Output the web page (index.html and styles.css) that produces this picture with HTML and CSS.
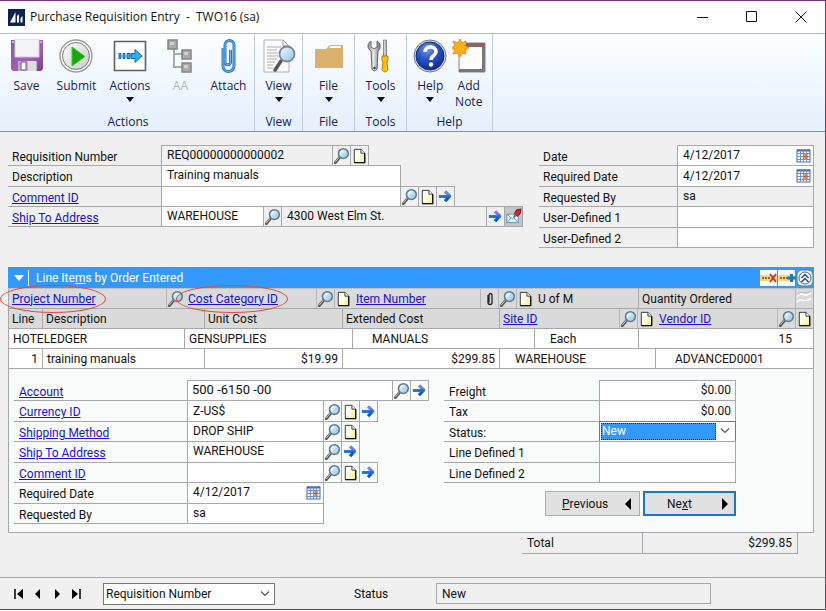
FILE: index.html
```html
<!DOCTYPE html>
<html lang="en">
<head>
<meta charset="utf-8">
<meta name="viewport" content="width=device-width, initial-scale=1">
<title>Purchase Requisition Entry</title>
<link rel="stylesheet" href="styles.css">
</head>
<body>
<svg class="sprite" aria-hidden="true">
  <defs>
    <linearGradient id="g-lens" x1="0" y1="0" x2="1" y2="1"><stop offset="0" stop-color="#f4fbff"/><stop offset="1" stop-color="#8fc1dc"/></linearGradient>
    <linearGradient id="g-page" x1="0" y1="0" x2="1" y2="1"><stop offset=".4" stop-color="#fffff4"/><stop offset="1" stop-color="#f5ef70"/></linearGradient>
    <linearGradient id="g-purple" x1="0" y1="0" x2="1" y2="1"><stop offset="0" stop-color="#8a5f9e"/><stop offset=".6" stop-color="#a05cb8"/><stop offset="1" stop-color="#74458c"/></linearGradient>
    <linearGradient id="g-steel" x1="0" y1="0" x2="1" y2="0"><stop offset="0" stop-color="#8d8d8d"/><stop offset=".45" stop-color="#e8e8e8"/><stop offset="1" stop-color="#6f6f6f"/></linearGradient>
    <linearGradient id="g-silver" x1="0" y1="0" x2="1" y2="1"><stop offset="0" stop-color="#ffffff"/><stop offset="1" stop-color="#c9c9c9"/></linearGradient>
    <radialGradient id="g-help" cx=".4" cy=".25" r=".8"><stop offset="0" stop-color="#7396e6"/><stop offset=".5" stop-color="#2450c0"/><stop offset="1" stop-color="#132a86"/></radialGradient>
  </defs>
  <symbol id="i-lens" viewBox="0 0 18 18">
    <path d="M7 11L2.5 16.5" stroke="#55504e" stroke-width="3" stroke-linecap="round"/>
    <path d="M6.6 10.8L2.6 15.8" stroke="#d8d4d0" stroke-width="1" stroke-linecap="round"/>
    <circle cx="11" cy="7" r="5.200" fill="url(#g-lens)" stroke="#5c7c92" stroke-width="1.600"/>
    <path d="M8 7a3 3 0 0 1 3-3" stroke="#fff" stroke-width="1.2" fill="none"/>
  </symbol>
  <symbol id="i-page" viewBox="0 0 18 18">
    <path d="M3.500 2.500h7l4 4v10h-11z" fill="url(#g-page)" stroke="#333" stroke-width="1"/>
    <path d="M10.500 2.500v4h4" fill="#fff" stroke="#333" stroke-width="1"/>
    <path d="M14.500 6.500v10h-11" fill="none" stroke="#111" stroke-width="1.400"/>
  </symbol>
  <symbol id="i-arrow" viewBox="0 0 18 18">
    <path d="M2 9h11" fill="none" stroke="#1870d0" stroke-width="3"/>
    <path d="M13.500 8.500L8.500 14" stroke="#0d58b8" stroke-width="3.400"/>
    <path d="M8.500 3.500l5.500 5.500" stroke="#7c80d6" stroke-width="3.400"/>
    <path d="M11 6.500L15.500 9 11 11.500z" fill="#1870d0"/>
  </symbol>
  <symbol id="i-cal" viewBox="0 0 16 14">
    <rect x="1" y="1" width="13" height="12" fill="#fff" stroke="#4668a8"/>
    <path d="M1 1.500h13" stroke="#3f68b8" stroke-width="2"/>
    <path d="M4.500 1v12M7.500 1v12M10.500 1v12M1 4.500h13M1 7.500h13M1 10.500h13" stroke="#6f8fca" stroke-width="1"/>
    <rect x="8" y="5" width="4" height="5" fill="#f0a080"/>
    <path d="M8 7.500h4M10 5v5" stroke="#cc5a38"/>
  </symbol>
  <symbol id="i-mail" viewBox="0 0 18 18">
    <path d="M2 6.500h12v9H2z" fill="#e8f6fa" stroke="#5c98b0"/>
    <path d="M2 6.500l6 5 6-5M2 15.500l4.500-5M14 15.500l-4.500-5" fill="none" stroke="#5c98b0"/>
    <path d="M12 2l5-1-1 5-3 3-3-3z" fill="#d8202c" stroke="#8e1018"/>
    <path d="M11 7l-2 3" stroke="#555" stroke-width="1.200"/>
  </symbol>
  <symbol id="i-clip" viewBox="0 0 8 16">
    <path d="M2 4v7.500a2 2 0 0 0 4 0V4a1.500 1.500 0 0 0-3 0v7.500" fill="none" stroke="#222" stroke-width="1.300"/>
  </symbol>
  <symbol id="i-caret" viewBox="0 0 10 6"><path d="M1 0h8L5 5z" fill="#0c0c3a"/></symbol>
  <symbol id="i-chevron" viewBox="0 0 10 6"><path d="M1 .5l4 4 4-4" fill="none" stroke="#555" stroke-width="1.200"/></symbol>
</svg>

<div class="window">
  <header class="titlebar">
    <svg class="app-icon" viewBox="0 0 17 17" aria-hidden="true"><path d="M0 0h17v17H0z" fill="#0a2450"/><path d="M2 13.500L7.500 3v10.500zM9 13.500V7l2-2v8.500zM12.500 13.500V9l2-2v6.500z" fill="#fff"/></svg>
    <h1>Purchase Requisition Entry&nbsp; -&nbsp; TWO16 (sa)</h1>
    <div class="window-controls">
      <button aria-label="Minimize"><svg viewBox="0 0 12 12"><path d="M0 6.500h11"/></svg></button>
      <button aria-label="Maximize"><svg viewBox="0 0 12 12"><path d="M.5 .5h10v10H.5z"/></svg></button>
      <button aria-label="Close"><svg viewBox="0 0 12 12"><path d="M.5 .5l11 11M11.500 .5l-11 11"/></svg></button>
    </div>
  </header>

  <nav class="ribbon" aria-label="Ribbon">
    <section class="group group-actions">
      <div class="tools">
        <button class="tool"><svg viewBox="0 0 34 34">
          <path d="M1 1h32v29l-2 2H3l-2-2z" fill="url(#g-purple)"/><path d="M5 0h24v18H5z" fill="#f3f2f4" stroke="#d4cdd8"/><path d="M8 22h19v10H8z" fill="#eee"/><path d="M8 22h19v10H8z" fill="#7b6a84" opacity=".45"/><path d="M18 22h8v10h-8z" fill="#ddd"/><path d="M11 23h5v8h-5z" fill="#fff" stroke="#76508a"/><path d="M2 3h2M30 3h2" stroke="#fff"/></svg>Save</button>
        <button class="tool"><svg viewBox="0 0 34 34">
          <circle cx="17" cy="17" r="16" fill="#fff" stroke="#999" stroke-width="1.400"/><circle cx="17" cy="17" r="13.500" fill="url(#g-silver)" stroke="#777"/><path d="M13 8l13 9.500L13 27z" fill="#16a80e" stroke="#3fc636"/></svg>Submit</button>
        <button class="tool"><svg viewBox="0 0 34 34">
          <path d="M1.500 2.500h31v29h-31z" fill="#fdfdfd" stroke="#606060" stroke-width="1.600"/><path d="M6 14.500h2v5H6zM10 14.500h2v5h-2zM14 14.500h3v5h-3zM18 14.500h4v-4l7 6.500-7 6.500v-4h-4z" fill="#30b0f4" stroke="#1668a8"/></svg>Actions<svg class="caret"><use href="#i-caret"/></svg></button>
        <button class="tool" disabled><svg viewBox="0 0 34 34">
          <path d="M11 10v18h11M11 15h11" fill="none" stroke="#aaa" stroke-width="2"/><path d="M5 1h9v9H5zM19 11h9v9h-9zM19 24h9v9h-9z" fill="#aaa" stroke="#858585" stroke-width="1.500"/><path d="M7 3h4v3H7zM21 13h4v3h-4zM21 26h4v3h-4z" fill="#d0d0d0"/></svg>AA</button>
        <button class="tool"><svg viewBox="0 0 34 34">
          <path d="M12 9v18a5 5 0 0 0 11 0V6a4 4 0 0 0-9 0v18a3 3 0 0 0 5.500 0V11" fill="none" stroke="#2f78bc" stroke-width="3"/><path d="M12 9v18a5 5 0 0 0 11 0V6a4 4 0 0 0-9 0v18a3 3 0 0 0 5.500 0V11" fill="none" stroke="#76b4e6" stroke-width="1"/></svg>Attach</button>
      </div>
      <h2>Actions</h2>
    </section>
    <section class="group group-view">
      <div class="tools"><button class="tool"><svg viewBox="0 0 34 34">
        <path d="M2 1h19l6 6v26H2z" fill="#fcfcfc" stroke="#b0b0b0"/><path d="M21 1v6h6" fill="none" stroke="#999"/><path d="M5 8h14M5 11h10M5 14h11M5 17h11M5 20h10M5 23h8M5 26h6M5 29h6" stroke="#a9a9b5"/><path d="M19 22l-6 9" stroke="#555" stroke-width="3.500" stroke-linecap="round"/><circle cx="25" cy="15" r="7.500" fill="url(#g-lens)" stroke="#70889c" stroke-width="1.800"/></svg>View<svg class="caret"><use href="#i-caret"/></svg></button></div>
      <h2>View</h2>
    </section>
    <section class="group group-file">
      <div class="tools"><button class="tool"><svg viewBox="0 0 34 34">
        <path d="M3 10h11l4-4h13v23H3z" fill="#d9b06c"/><path d="M17 9l2-2h10v2z" fill="#fff"/></svg>File<svg class="caret"><use href="#i-caret"/></svg></button></div>
      <h2>File</h2>
    </section>
    <section class="group group-file">
      <div class="tools"><button class="tool"><svg viewBox="0 0 34 34">
        <path d="M7 2v6l3 2 3-2V2c4 2 4 8 1 10l-1 18q-3 4-5 0L7 12C3 10 3 4 7 2z" fill="url(#g-steel)" stroke="#666"/><circle cx="10.500" cy="29" r="1.300" fill="#444"/><path d="M19.500 1h3v16h-3z" fill="url(#g-steel)" stroke="#666" stroke-width=".6"/><path d="M18 17h6v4l-1 3 1 7q-3 4-6 0l1-7-1-3z" fill="#f9bd16" stroke="#b8860b"/></svg>Tools<svg class="caret"><use href="#i-caret"/></svg></button></div>
      <h2>Tools</h2>
    </section>
    <section class="group group-help">
      <div class="tools">
        <button class="tool"><svg viewBox="0 0 34 34">
          <circle cx="17" cy="17" r="16" fill="#d7dbe3" stroke="#667792"/><circle cx="17" cy="17" r="14" fill="url(#g-help)" stroke="#172b70"/><path d="M12 13c0-7 11-6.500 11-.5 0 4.500-5 4-5 8.500" fill="none" stroke="#fff" stroke-width="3.600"/><circle cx="18" cy="25.500" r="2.200" fill="#fff"/></svg>Help<svg class="caret"><use href="#i-caret"/></svg></button>
        <button class="tool"><svg viewBox="0 0 34 34">
          <path d="M7 4h26v29H7z" fill="#fdfdfd" stroke="#858585"/><path d="M7 4h26v4H7z" fill="#8e655c"/><path d="M31.500 8v23.500H7" fill="none" stroke="#777" stroke-width="3"/><path d="M8 0l2 4 4-2-1 5 4 2-4 2 1 4-4-1-2 4-2-4-5 1 2-4-4-2 4-2-2-5 5 2z" fill="#ffae22" stroke="#e8900e"/></svg><span>Add<br>Note</span></button>
      </div>
      <h2>Help</h2>
    </section>
  </nav>

  <main>
    <div class="head">
      <div class="form form-head">
        <div class="row"><label for="req">Requisition Number</label><input id="req" class="w-id read" value="REQ00000000000002" readonly><button class="ic" aria-label="Lookup requisition"><svg><use href="#i-lens"/></svg></button><button class="ic" aria-label="Requisition note"><svg><use href="#i-page"/></svg></button></div>
        <div class="row"><label for="desc">Description</label><input id="desc" class="w-wide" value="Training manuals"></div>
        <div class="row"><label for="comment"><a href="#comment">Comment ID</a></label><input id="comment" class="w-wide"><button class="ic" aria-label="Lookup comment"><svg><use href="#i-lens"/></svg></button><button class="ic" aria-label="Comment note"><svg><use href="#i-page"/></svg></button><button class="ic" aria-label="Open comment"><svg><use href="#i-arrow"/></svg></button></div>
        <div class="row"><label for="ship"><a href="#ship">Ship To Address</a></label><input id="ship" class="w-code" value="WAREHOUSE"><button class="ic" aria-label="Lookup address"><svg><use href="#i-lens"/></svg></button><input class="w-street read" aria-label="Street address" value="4300 West Elm St." readonly><button class="ic" aria-label="Open address"><svg><use href="#i-arrow"/></svg></button><button class="ic dark" aria-label="Internet information"><svg><use href="#i-mail"/></svg></button></div>
      </div>
      <div class="form form-dates">
        <div class="row"><label for="date">Date</label><span class="datebox"><input id="date" value="4/12/2017"><button aria-label="Pick date"><svg><use href="#i-cal"/></svg></button></span></div>
        <div class="row"><label for="rdate">Required Date</label><span class="datebox"><input id="rdate" value="4/12/2017"><button aria-label="Pick required date"><svg><use href="#i-cal"/></svg></button></span></div>
        <div class="row"><label for="by">Requested By</label><input id="by" class="w-std read" value="sa" readonly></div>
        <div class="row"><label for="ud1">User-Defined 1</label><input id="ud1" class="w-std"></div>
        <div class="row"><label for="ud2">User-Defined 2</label><input id="ud2" class="w-std"></div>
      </div>
    </div>

    <section class="lines">
      <div class="lines-bar">
        <button class="sort"><svg class="sort-caret" viewBox="0 0 10 6"><path d="M0 0h10L5 6z" fill="#fff"/></svg><span>Line Ite<u>m</u>s by Order Entered</span></button>
        <div class="bar-tools">
          <button aria-label="Delete row"><svg viewBox="0 0 18 18"><path d="M0 1h17v16H0z" fill="#fbfbf4"/><path d="M0 6h17v6H0z" fill="#f0d48a"/><path d="M2 9h9" stroke="#9a6a2c" stroke-width="2" stroke-dasharray="2 1"/><path d="M10 5l6 8M16 5l-6 8" stroke="#c83232" stroke-width="1.800"/></svg></button>
          <button aria-label="Insert row"><svg viewBox="0 0 18 18"><path d="M0 1h17v16H0z" fill="#fbfbf4"/><path d="M0 6h17v6H0z" fill="#f0d48a"/><path d="M2 9h8" stroke="#9a6a2c" stroke-width="2" stroke-dasharray="2 1"/><path d="M13.500 5v8M9.500 9h8" stroke="#1680b4" stroke-width="3"/></svg></button>
          <button aria-label="Hide details"><svg viewBox="0 0 18 18"><rect x="1" y="1" width="16" height="16" rx="5" fill="#e4eef4" stroke="#607c90"/><circle cx="9" cy="9" r="6" fill="#f8fcff" stroke="#4a7488"/><path d="M5.500 9L9 5.500 12.500 9M5.500 13L9 9.500l3.500 3.500" fill="none" stroke="#244e68" stroke-width="1.500"/></svg></button>
        </div>
      </div>
      <table>
        <colgroup><col class="c1"><col class="c2"><col class="c3"><col class="c4"><col class="c5"><col class="c6"><col class="c7"><col class="c8"><col class="c9"><col class="c10"></colgroup>
        <thead>
          <tr>
            <th colspan="2" class="bare"><div class="hc"><a class="ringed" href="#project">Project Number</a><button class="ic" aria-label="Lookup project"><svg><use href="#i-lens"/></svg></button></div></th>
            <th colspan="3" class="bare"><div class="hc"><a class="ringed" href="#cost">Cost Category ID</a><button class="ic" aria-label="Lookup cost category"><svg><use href="#i-lens"/></svg></button><button class="ic" aria-label="Cost category note"><svg><use href="#i-page"/></svg></button></div></th>
            <th colspan="2" class="bare"><div class="hc"><a href="#item">Item Number</a><button class="ic" aria-label="Attachments"><svg class="clip"><use href="#i-clip"/></svg></button><button class="ic" aria-label="Lookup item"><svg><use href="#i-lens"/></svg></button><button class="ic" aria-label="Item note"><svg><use href="#i-page"/></svg></button></div></th>
            <th><div class="hc">U of M</div></th>
            <th colspan="2"><div class="hc"><span>Quantity Ordered</span><button class="ic" disabled aria-label="Scroll lines"><svg viewBox="0 0 18 18"><path d="M1 7q3-4 7-2 4 1 8-2M1 13q3-4 7-2 4 1 8-2" fill="none" stroke="#fff" stroke-width="1.500"/><path d="M1 5q3-4 7-2 4 1 8-2" fill="none" stroke="#b8b8b8"/></svg></button></div></th>
          </tr>
          <tr>
            <th><div class="hc">Line</div></th>
            <th colspan="2"><div class="hc">Description</div></th>
            <th><div class="hc">Unit Cost</div></th>
            <th colspan="2"><div class="hc">Extended Cost</div></th>
            <th colspan="3" class="bare"><div class="hc"><a href="#site">Site ID</a><button class="ic" aria-label="Lookup site"><svg><use href="#i-lens"/></svg></button><button class="ic" aria-label="Site note"><svg><use href="#i-page"/></svg></button></div></th>
            <th><div class="hc"><a href="#vendor">Vendor ID</a><button class="ic" aria-label="Lookup vendor"><svg><use href="#i-lens"/></svg></button><button class="ic" aria-label="Vendor note"><svg><use href="#i-page"/></svg></button></div></th>
          </tr>
        </thead>
        <tbody>
          <tr><td colspan="2">HOTELEDGER</td><td colspan="3">GENSUPPLIES</td><td colspan="2" class="in2">MANUALS</td><td class="in1">Each</td><td colspan="2" class="num qty">15</td></tr>
          <tr><td class="num">1</td><td colspan="2">training manuals</td><td class="num">$19.99</td><td colspan="2" class="num">$299.85</td><td colspan="3" class="in1">WAREHOUSE</td><td class="in2">ADVANCED0001</td></tr>
        </tbody>
      </table>

      <div class="detail">
        <div class="form form-line">
          <div class="row"><label for="acct"><a href="#acct">Account</a></label><input id="acct" class="w-acct big" value="500 -6150 -00"><button class="ic" aria-label="Lookup account"><svg><use href="#i-lens"/></svg></button><button class="ic" aria-label="Open account"><svg><use href="#i-arrow"/></svg></button></div>
          <div class="row"><label for="cur"><a href="#cur">Currency ID</a></label><input id="cur" class="w-std" value="Z-US$"><button class="ic" aria-label="Lookup currency"><svg><use href="#i-lens"/></svg></button><button class="ic" aria-label="Currency note"><svg><use href="#i-page"/></svg></button><button class="ic" aria-label="Open currency"><svg><use href="#i-arrow"/></svg></button></div>
          <div class="row"><label for="method"><a href="#method">Shipping Method</a></label><input id="method" class="w-std" value="DROP SHIP"><button class="ic" aria-label="Lookup method"><svg><use href="#i-lens"/></svg></button><button class="ic" aria-label="Method note"><svg><use href="#i-page"/></svg></button></div>
          <div class="row"><label for="lship"><a href="#lship">Ship To Address</a></label><input id="lship" class="w-std" value="WAREHOUSE"><button class="ic" aria-label="Lookup line address"><svg><use href="#i-lens"/></svg></button><button class="ic" aria-label="Open line address"><svg><use href="#i-arrow"/></svg></button></div>
          <div class="row"><label for="lcom"><a href="#lcom">Comment ID</a></label><input id="lcom" class="w-std"><button class="ic" aria-label="Lookup line comment"><svg><use href="#i-lens"/></svg></button><button class="ic" aria-label="Line comment note"><svg><use href="#i-page"/></svg></button><button class="ic" aria-label="Open line comment"><svg><use href="#i-arrow"/></svg></button></div>
          <div class="row"><label for="ldate">Required Date</label><span class="datebox"><input id="ldate" value="4/12/2017"><button aria-label="Pick line date"><svg><use href="#i-cal"/></svg></button></span></div>
          <div class="row"><label for="lby">Requested By</label><input id="lby" class="w-std" value="sa"></div>
        </div>
        <div class="side">
          <div class="form form-cost">
            <div class="row"><label for="freight">Freight</label><input id="freight" class="w-std money" value="$0.00"></div>
            <div class="row"><label for="tax">Tax</label><input id="tax" class="w-std money" value="$0.00"></div>
            <div class="row"><label for="status">Status:</label><span class="pick"><select id="status"><option>New</option></select><svg class="chevron"><use href="#i-chevron"/></svg></span></div>
            <div class="row"><label for="ld1">Line Defined 1</label><input id="ld1" class="w-std"></div>
            <div class="row"><label for="ld2">Line Defined 2</label><input id="ld2" class="w-std"></div>
          </div>
          <div class="steps">
            <button class="step"><span><u>P</u>revious</span><svg viewBox="0 0 6 12"><path d="M6 0v12L0 6z"/></svg></button>
            <button class="step primary"><span>Ne<u>x</u>t</span><svg viewBox="0 0 6 12"><path d="M0 0v12l6-6z"/></svg></button>
          </div>
        </div>
      </div>
    </section>

    <div class="total"><span>Total</span><output>$299.85</output></div>
  </main>

  <footer class="statusbar">
    <div class="pager">
      <button aria-label="First"><svg viewBox="0 0 10 10"><path d="M1 0v10" stroke="#000" stroke-width="1.500"/><path d="M9 0v10L3 5z"/></svg></button>
      <button aria-label="Back"><svg viewBox="0 0 10 10"><path d="M7 0v10L2 5z"/></svg></button>
      <button aria-label="Forward"><svg viewBox="0 0 10 10"><path d="M3 0v10l5-5z"/></svg></button>
      <button aria-label="Last"><svg viewBox="0 0 10 10"><path d="M9 0v10" stroke="#000" stroke-width="1.500"/><path d="M1 0v10l6-5z"/></svg></button>
    </div>
    <span class="sortby"><select aria-label="Sort by"><option>Requisition Number</option></select><svg class="chevron"><use href="#i-chevron"/></svg></span>
    <label for="docstatus">Status</label>
    <input id="docstatus" class="docstatus" value="New" readonly>
  </footer>
</div>
</body>
</html>
```
FILE: styles.css
```css
* { box-sizing: border-box; }

body {
  margin: 0;
  background: #fff;
  color: #111;
  font: 12px/16px Roboto, "Liberation Sans", sans-serif;
}

button, input, select { font: inherit; color: inherit; margin: 0; border-radius: 0; }
button { padding: 0; border: 0; background: none; }
a { color: #1a12d0; }
h1, h2 { margin: 0; font-weight: 400; }

.sprite { position: absolute; width: 0; height: 0; }

.window {
  display: flex;
  flex-direction: column;
  min-height: calc(100vh - 1px);
  border: 1px solid #7c3480;
  border-left: 0;
  background: #f0f0f0;
}

/* Title bar */
.titlebar {
  display: flex;
  align-items: center;
  height: 32px;
  padding-left: 8px;
  background: #fff;
  font-family: "Open Sans", "Noto Sans", sans-serif;
}
.app-icon { width: 17px; height: 17px; margin-right: 5px; }
.titlebar h1 { font-size: 12px; line-height: 16px; }
.window-controls { display: flex; margin-left: auto; }
.window-controls button { display: grid; place-items: center; width: 49px; height: 32px; }
.window-controls svg { width: 12px; height: 12px; fill: none; stroke: #111; }

/* Ribbon */
.ribbon {
  display: flex;
  height: 99px;
  border-top: 1px solid #b4bac4;
  border-bottom: 1px solid #8890a0;
  background: linear-gradient(#fcfdff, #e4f0fd);
  color: #1a1a58;
  font-family: "Open Sans", "Noto Sans", sans-serif;
}
.group {
  display: flex;
  flex-direction: column;
  justify-content: space-between;
  padding: 5px 1px 0;
  border-right: 1px solid #c2ccda;
}
.group-actions { width: 255px; padding-left: 3px; }
.group-view { width: 48px; }
.group-file { width: 52px; }
.group-help { width: 86px; padding: 5px 4px 0; }
.group h2 { font-size: 12px; line-height: 18px; text-align: center; }
.tools { display: flex; justify-content: space-around; align-items: flex-start; }
.tool { display: flex; flex-direction: column; align-items: center; line-height: 16px; }
.tool svg { width: 34px; height: 34px; margin-bottom: 5px; }
.tool .caret { width: 10px; height: 6px; margin: 3px 0 0; }
.tool:disabled { color: #b4b8c2; }

/* Forms */
main { flex: 1; padding: 14px 11px 0 8px; }
.head { display: flex; justify-content: space-between; min-height: 121px; align-items: flex-start; }

.form { display: grid; grid-auto-rows: 1fr; }
.form-head { min-height: 81px; }
.form-dates, .form-cost { min-height: 102px; }
.form-line { min-height: 143px; }

.row { display: flex; }
.row label {
  flex: none;
  width: 154px;
  padding: 3px 4px 0;
  border-bottom: 1px solid #a8a8ac;
  white-space: nowrap;
  line-height: 16px;
}
.form-dates label { width: 139px; }
.form-line label { width: 174px; padding-left: 5px; }
.form-cost label { width: 156px; padding-left: 5px; }

.row input, .ic, .datebox, .pick {
  min-width: 0;
  margin: -1px 0 0 -1px;
  border: 1px solid #a8a8ac;
  background: #fff;
}
.row input { padding: 0 5px 1px; outline: 0; }
.row .read { background: #f0f0f0; }
.row .big { font-size: 13px; padding-left: 4px; }
.row .money { text-align: right; padding-right: 4px; }
.w-id { width: 172px; }
.w-wide { width: 240px; }
.w-code { width: 103px; }
.w-street { width: 206px; }
.w-acct { width: 206px; }
.w-std, .datebox, .pick { width: 137px; }

.ic { display: grid; place-items: center; flex: none; width: 19px; background: transparent; }
.ic svg { width: 17px; height: 17px; }
.ic.dark { background: #c4c4c6; }

.datebox { display: flex; align-items: center; padding-right: 1px; }
.row .datebox input { flex: 1; margin: 0; border: 0; }
.datebox svg { display: block; width: 16px; height: 14px; }

.chevron { flex: none; width: 10px; height: 6px; margin: 0 4px; pointer-events: none; }
.pick { display: flex; align-items: center; padding: 1px; border-color: #777; }
select { appearance: none; min-width: 0; flex: 1; border: 0; padding: 0 2px; background: #fff; outline: 0; }
.pick select { align-self: stretch; border: 1px dotted #222; padding: 0; background: #39f; color: #fff; line-height: 14px; }

/* Line items */
.lines-bar {
  display: flex;
  justify-content: space-between;
  height: 21px;
  padding-left: 6px;
  background: #39f;
  color: #fff;
}
.sort { display: flex; align-items: center; }
.sort-caret { width: 10px; height: 6px; }
.sort span { margin-left: 4px; padding-left: 7px; border-left: 1px solid #fff; }
.bar-tools { display: flex; align-items: center; }
.bar-tools svg { display: block; width: 18px; height: 18px; }

table { width: 100%; table-layout: fixed; border-collapse: collapse; }
.c1 { width: 34px; } .c2 { width: 142px; } .c3 { width: 20px; } .c4 { width: 138px; } .c5 { width: 10px; }
.c6 { width: 147px; } .c7 { width: 35px; } .c8 { width: 104px; } .c9 { width: 17px; } .c10 { width: 158px; }
th { height: 20px; padding: 0; border: 1px solid #a8a8ac; border-top-color: #c0c0c0; background: #d9dad9; font-weight: 400; text-align: left; }
thead tr:first-child th:not(:last-child), th.bare { border-right-color: #d9dad9; }
thead tr:first-child th:nth-child(4) { border-right-color: #a8a8ac; }
.hc { display: flex; align-items: center; height: 19px; padding-left: 3px; white-space: nowrap; }
.hc > a, .hc > span { margin-right: auto; }
.hc .ic { margin: 0; width: 18px; height: 19px; border-width: 0 0 0 1px; border-color: #b6b6b6; }
.hc .clip { width: 8px; height: 16px; }
td { height: 20px; padding: 0 4px; border: 1px solid #a8a8ac; background: #fff; line-height: 16px; white-space: nowrap; }
.num { text-align: right; }
.qty { padding-right: 21px; }
.in1 { padding-left: 15px; }
.in2 { padding-left: 19px; }

/* Red callout rings around two column headings */
.ringed { position: relative; }
.ringed::after {
  content: "";
  position: absolute;
  inset: -6px -10px -6px -12px;
  border: 1px solid #e04848;
  border-radius: 50%;
  pointer-events: none;
}

.detail {
  display: flex;
  gap: 14px;
  padding: 12px 5px 8px;
  border: 1px solid #a8a8ac;
  border-top: 0;
  background: #f8fbfa;
}
.form-line { width: 416px; align-self: flex-start; }
.steps { display: flex; justify-content: flex-end; gap: 3px; margin-top: 8px; }
.step {
  display: flex;
  align-items: center;
  justify-content: space-between;
  width: 95px;
  height: 25px;
  padding: 0 8px 0 16px;
  border: 1px solid #adadad;
  background: #e1e1e1;
}
.step.primary { width: 93px; border: 2px solid #1878d0; padding: 0 6px 0 22px; }
.step svg { width: 6px; height: 12px; }

.total { display: flex; width: 276px; margin: 0 16px 0 auto; border: 1px solid #a8a8ac; border-width: 0 1px 1px 0; line-height: 20px; }
.total span { flex: 1; padding-left: 5px; }
.total output { width: 155px; padding-right: 5px; border-left: 1px solid #a8a8ac; text-align: right; }

/* Record browser and status */
.statusbar {
  display: flex;
  align-items: center;
  height: 32px;
  padding-left: 9px;
  border-top: 1px solid #a8a8a8;
}
.pager { display: flex; width: 94px; }
.pager button { display: grid; place-items: center; width: 19px; height: 20px; }
.pager svg { width: 10px; height: 10px; }
.sortby { display: flex; align-items: center; width: 172px; height: 22px; border: 1px solid #777; background: #fff; }
.statusbar label { margin-left: 79px; width: 82px; }
.docstatus { width: 275px; height: 21px; padding: 0 5px; border: 1px solid #a8a8ac; background: #f0f0f0; }
```
